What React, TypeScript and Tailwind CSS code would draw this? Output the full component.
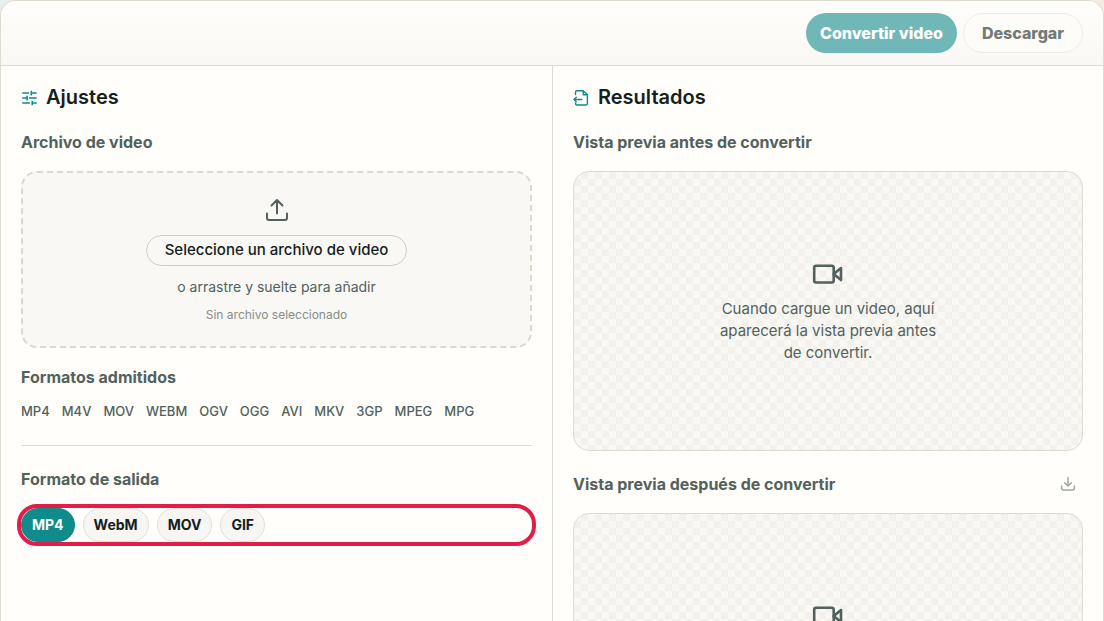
import { useState } from "react";

const admitted = ["MP4", "M4V", "MOV", "WEBM", "OGV", "OGG", "AVI", "MKV", "3GP", "MPEG", "MPG"];
const outputs = ["MP4", "WebM", "MOV", "GIF"];

function TuneIcon() {
  return (
    <svg className="size-4 overflow-visible text-[#108b8b]" viewBox="0 0 16 16" fill="none" stroke="currentColor" strokeWidth="1.6" aria-hidden="true">
      <path d="M1.200 4H8M10.300 4h5.400M10.300 1.800v4.600M1.200 9h4.900M8 9h7.700M6.100 6.800v4.600M1.200 14H9M11.200 14h4.500M11.200 11.800v4.500" />
    </svg>
  );
}

function ResultIcon() {
  return (
    <svg className="size-4 overflow-visible text-[#108b8b]" viewBox="0 0 16 16" fill="none" stroke="currentColor" strokeWidth="1.4" strokeLinecap="round" strokeLinejoin="round" aria-hidden="true">
      <path d="M2.500 5.500V3.200A1.500 1.500 0 0 1 4 1.700h6.200l4.200 4v8.800a1.500 1.500 0 0 1-1.500 1.500H4a1.500 1.500 0 0 1-1.500-1.500V14M10.200 1.700v4h4.200M8.800 10.500H.9M3.300 8.300.9 10.500l2.400 2.200" />
    </svg>
  );
}

function UploadIcon() {
  return (
    <svg className="size-7 text-[#52615d]" viewBox="0 0 28 28" fill="none" stroke="currentColor" strokeWidth="2" strokeLinecap="round" strokeLinejoin="round" aria-hidden="true">
      <path d="M14 17.500V4M8.500 9.500 14 4l5.500 5.500M4 17.500V22a2 2 0 0 0 2 2h16a2 2 0 0 0 2-2v-4.500" />
    </svg>
  );
}

function DownloadIcon() {
  return (
    <svg className="size-4" viewBox="0 0 16 16" fill="none" stroke="currentColor" strokeWidth="1.500" strokeLinecap="round" strokeLinejoin="round" aria-hidden="true">
      <path d="M8 1.500v8.500M4.600 6.800 8 10l3.400-3.200M1.700 10v2.800a1.200 1.200 0 0 0 1.200 1.200h10.200a1.200 1.200 0 0 0 1.200-1.200V10" />
    </svg>
  );
}

function VideoIcon() {
  return (
    <svg className="h-8 w-8 text-[#52615d]" viewBox="0 0 32 32" fill="none" stroke="currentColor" strokeWidth="2.600" strokeLinejoin="round" aria-hidden="true">
      <rect x="2.200" y="7.700" width="19.500" height="16.800" rx="2" />
      <path d="m21.700 16.100 7.300-6v12z" />
    </svg>
  );
}

function Preview({ text }: { text: string }) {
  return (
    <div className="flex h-70 flex-col items-center justify-center gap-2 rounded-2xl border border-[#dedcd0] bg-[#f9f8f4] bg-[conic-gradient(#f2f1ec_25%,transparent_0_50%,#f2f1ec_0_75%,transparent_0)] bg-size-[14px_14px] text-center">
      <VideoIcon />
      <p className="max-w-55 text-[15px] leading-[22px] text-[#52615d]">{text}</p>
    </div>
  );
}

export default function App() {
  const [format, setFormat] = useState("MP4");
  return (
    <div className="h-screen overflow-hidden bg-linear-to-r from-[#e6efed] to-[#f4ede2] font-['Inter','Liberation_Sans',sans-serif] text-[#14201e]">
      <main className="flex min-h-full flex-col overflow-hidden rounded-t-2xl border border-b-0 border-[#dedcd0] bg-[#fffefa]">
        <header className="flex justify-end gap-1.5 border-b border-[#dedcd0] bg-linear-to-b from-[#fffefa] to-[#f9f8f4] px-5 py-3">
          <button type="button" className="h-10 rounded-full bg-[#70b7b7] px-3.5 text-base font-extrabold text-white">Convertir video</button>
          <button type="button" className="h-10 rounded-full border border-[#edebe4] bg-[#fdfcf8] px-[18px] text-base font-extrabold text-[#727976]">Descargar</button>
        </header>
        <div className="grid flex-1 grid-cols-2">
          <section className="flex flex-col px-5 pt-4">
            <h2 className="flex items-center gap-[9px] text-xl leading-[30px] font-semibold"><TuneIcon />Ajustes</h2>
            <h3 className="mt-[17px] text-base leading-[26px] font-bold text-[#52615d]">Archivo de video</h3>
            <div className="mt-4 flex h-[177px] flex-col items-center rounded-2xl border-2 border-dashed border-[#dcd8cb] bg-[#f9f8f4] pt-[23px]">
              <UploadIcon />
              <button type="button" className="mt-[11px] h-[31px] rounded-full border border-[#cfcdbf] px-[18px] text-[15px] font-medium">Seleccione un archivo de video</button>
              <p className="mt-[11px] text-sm leading-5 text-[#52615d]">o arrastre y suelte para añadir</p>
              <p className="mt-2 text-xs leading-5 text-[#858e8a]">Sin archivo seleccionado</p>
            </div>
            <h3 className="mt-4 text-base leading-[26px] font-bold text-[#52615d]">Formatos admitidos</h3>
            <ul className="mt-[11px] flex flex-wrap gap-x-3 text-[13px] leading-5 font-medium text-[#52615d]">
              {admitted.map((name) => <li key={name}>{name}</li>)}
            </ul>
            <hr className="mt-6 border-[#dedcd0]" />
            <h3 className="mt-5 text-base leading-[26px] font-bold text-[#52615d]">Formato de salida</h3>
            <div role="group" aria-label="Formato de salida" className="mt-4 flex gap-2 rounded-2xl outline-4 outline-[#e21d48]">
              {outputs.map((name) => (
                <button
                  key={name}
                  type="button"
                  aria-pressed={format === name}
                  onClick={() => setFormat(name)}
                  className={`h-[34px] rounded-full border px-2.5 text-sm font-bold ${format === name ? "border-[#108b8b] bg-[#108b8b] text-white" : "border-[#e2e0d6] bg-[#f7f6f2]"}`}
                >
                  {name}
                </button>
              ))}
            </div>
          </section>
          <section className="flex flex-col border-l border-[#dedcd0] px-5 pt-4">
            <h2 className="flex items-center gap-[9px] text-xl leading-[30px] font-semibold"><ResultIcon />Resultados</h2>
            <h3 className="mt-[17px] mb-4 text-base leading-[26px] font-bold text-[#52615d]">Vista previa antes de convertir</h3>
            <Preview text="Cuando cargue un video, aquí aparecerá la vista previa antes de convertir." />
            <div className="mt-5 mb-4 flex items-center justify-between">
              <h3 className="text-base leading-[26px] font-bold text-[#52615d]">Vista previa después de convertir</h3>
              <button type="button" aria-label="Descargar" className="px-[7px] text-[#a3a8a5]"><DownloadIcon /></button>
            </div>
            <Preview text="Cuando termine la conversión, aquí aparecerá la vista previa del resultado." />
          </section>
        </div>
      </main>
    </div>
  );
}
